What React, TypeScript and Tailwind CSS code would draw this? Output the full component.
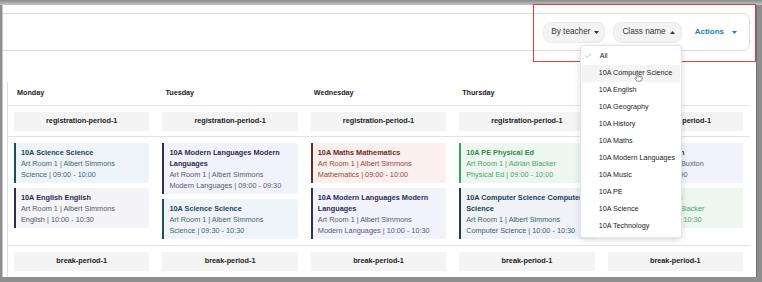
import { Check, Pointer } from "lucide-react";

type Tone = "science" | "english" | "languages" | "maths" | "pe" | "computing";

interface Lesson {
	title: string;
	room: string;
	time: string;
	tone: Tone;
}

const tones: Record<Tone, string> = {
	science: "bg-[#eef4f8] border-[#1f4d5a] text-[#46666f] [&>b]:text-[#1d4656]",
	english: "bg-[#f4f4f8] border-[#2b2d4a] text-[#55576a] [&>b]:text-[#2a2c46]",
	languages: "bg-[#f2f2fa] border-[#2f3058] text-[#585a72] [&>b]:text-[#2c2e50]",
	maths: "bg-[#fbf0ed] border-[#6e2b20] text-[#8c4c3e] [&>b]:text-[#6b2a1e]",
	pe: "bg-[#edf7f0] border-[#3aa15d] text-[#4ba566] [&>b]:text-[#2f8a4c]",
	computing: "bg-[#eff3f7] border-[#1d3b52] text-[#455a6b] [&>b]:text-[#1d3b52]",
};

const days: { name: string; lessons: Lesson[] }[] = [
	{
		name: "Monday",
		lessons: [
			{ title: "10A Science Science", room: "Art Room 1 | Albert Simmons", time: "Science | 09:00 - 10:00", tone: "science" },
			{ title: "10A English English", room: "Art Room 1 | Albert Simmons", time: "English | 10:00 - 10:30", tone: "english" },
		],
	},
	{
		name: "Tuesday",
		lessons: [
			{ title: "10A Modern Languages Modern Languages", room: "Art Room 1 | Albert Simmons", time: "Modern Languages | 09:00 - 09:30", tone: "languages" },
			{ title: "10A Science Science", room: "Art Room 1 | Albert Simmons", time: "Science | 09:30 - 10:30", tone: "science" },
		],
	},
	{
		name: "Wednesday",
		lessons: [
			{ title: "10A Maths Mathematics", room: "Art Room 1 | Albert Simmons", time: "Mathematics | 09:00 - 10:00", tone: "maths" },
			{ title: "10A Modern Languages Modern Languages", room: "Art Room 1 | Albert Simmons", time: "Modern Languages | 10:00 - 10:30", tone: "languages" },
		],
	},
	{
		name: "Thursday",
		lessons: [
			{ title: "10A PE Physical Ed", room: "Art Room 1 | Adrian Blacker", time: "Physical Ed | 09:00 - 10:00", tone: "pe" },
			{ title: "10A Computer Science Computer Science", room: "Art Room 1 | Albert Simmons", time: "Computer Science | 10:00 - 10:30", tone: "computing" },
		],
	},
	{
		name: "Friday",
		lessons: [
			{ title: "10A English English", room: "Art Room 1 | Abigail Buxton", time: "English | 09:00 - 10:00", tone: "languages" },
			{ title: "10A PE Physical Ed", room: "Art Room 1 | Adrian Blacker", time: "Physical Ed | 10:00 - 10:30", tone: "pe" },
		],
	},
];

const classes = [
	"10A Computer Science",
	"10A English",
	"10A Geography",
	"10A History",
	"10A Maths",
	"10A Modern Languages",
	"10A Music",
	"10A PE",
	"10A Science",
	"10A Technology",
];

function Caret({ up = false, className = "" }: { up?: boolean; className?: string }) {
	return (
		<svg width="5" height="3" viewBox="0 0 5 3" className={className}>
			<path d={up ? "M0 3 L2.5 0 L5 3 Z" : "M0 0 L5 0 L2.5 3 Z"} fill="currentColor" />
		</svg>
	);
}

function PeriodRow({ label, last = false }: { label: string; last?: boolean }) {
	return (
		<div className={`grid grid-cols-5 pt-[6px] pb-[5px] ${last ? "" : "border-b border-[#e3e3e3]"}`}>
			{days.map((d) => (
				<div key={d.name} className="pl-[6px] pr-[7px]">
					<div className="h-[19px] bg-[#f4f4f4] flex items-center justify-center text-[7.3px] font-bold text-[#222]">
						{label}
					</div>
				</div>
			))}
		</div>
	);
}

function LessonCard({ lesson }: { lesson: Lesson }) {
	return (
		<div
			className={`border-l-[2px] rounded-r-[2px] pl-[5px] pr-[4px] pt-[4px] pb-[3px] text-[7.3px] leading-[11px] flex flex-col ${tones[lesson.tone]}`}
		>
			<b className="font-bold">{lesson.title}</b>
			<span>{lesson.room}</span>
			<span>{lesson.time}</span>
		</div>
	);
}

export default function App() {
	return (
		<div className="relative w-[762px] h-[282px] flex flex-col bg-[#8e8e8e] overflow-hidden font-['Liberation_Sans',Arial,sans-serif]">
			<div className="h-[5px] shrink-0 bg-gradient-to-b from-[#8a8a8a] to-[#c6c6c6]" />
			<div className="flex-1 flex ml-[2px] mr-[5px] mb-[5px] border-l border-[#c8c8c8]">
				<div className="flex-1 bg-white flex flex-col overflow-hidden">
					{/* toolbar */}
					<div className="shrink-0 mt-[8px] -ml-[10px] mr-[6px] h-[38px] border border-[#dcdcdc] rounded-r-[7px] flex items-center justify-end pr-[12px]">
						<button className="h-[21px] rounded-[8px] bg-[#f3f3f3] border border-[#ebebeb] pl-[7px] pr-[5px] flex items-center gap-[4px] text-[8.2px] text-[#333]">
							By teacher
							<Caret />
						</button>
						<div className="relative ml-[8px]">
							<button className="h-[21px] rounded-[8px] bg-[#f3f3f3] border border-[#ebebeb] pl-[8px] pr-[6px] flex items-center gap-[4px] text-[8.2px] text-[#333]">
								Class name
								<Caret up />
							</button>
							<div className="absolute right-0 top-full mt-[2px] w-[102px] bg-white border border-[#e4e4e4] rounded-[3px] shadow-[0_2px_6px_rgba(0,0,0,0.15)] py-[2px] z-10">
								<div className="h-[17px] flex items-center text-[7.2px] text-[#222]">
									<Check size={8} strokeWidth={2.2} className="ml-[3px] mr-[8px] text-[#79b999]" />
									All
								</div>
								{classes.map((c, i) => (
									<div
										key={c}
										className={`relative h-[17px] flex items-center text-[7.2px] text-[#222] ${i === 0 ? "bg-[#f4f4f4] mx-[1px] pl-[17px]" : "pl-[18px]"}`}
									>
										{c}
										{i === 0 && (
											<Pointer
												size={9}
												strokeWidth={1.5}
												className="absolute left-[52px] top-[8px] text-[#555] fill-white"
											/>
										)}
									</div>
								))}
							</div>
						</div>
						<button className="ml-[13px] flex items-center gap-[8px] text-[8px] font-bold text-[#1a7fc0]">
							Actions
							<Caret />
						</button>
					</div>

					{/* timetable */}
					<div className="mt-[31px] ml-[4px] mr-[6px] flex-1 border-l border-[#e0e0e0] flex flex-col">
						<div className="grid grid-cols-5 h-[24px] border-b border-[#e3e3e3]">
							{days.map((d) => (
								<div key={d.name} className="pl-[9px] flex items-center text-[7.2px] font-bold text-[#222]">
									{d.name}
								</div>
							))}
						</div>
						<PeriodRow label="registration-period-1" />
						<div className="grid grid-cols-5 items-start border-b border-[#e3e3e3] pt-[6px] pb-[6px]">
							{days.map((d) => (
								<div key={d.name} className="pl-[6px] pr-[7px] flex flex-col gap-[5px]">
									{d.lessons.map((l) => (
										<LessonCard key={l.title + l.time} lesson={l} />
									))}
								</div>
							))}
						</div>
						<PeriodRow label="break-period-1" last />
					</div>
				</div>
				<div className="w-[1px] bg-[#6e6e6e]" />
			</div>

			{/* highlight box */}
			<div className="absolute left-[533px] top-[4px] w-[223px] h-[58px] border-[1.5px] border-[#e23b3b] pointer-events-none" />
		</div>
	);
}
